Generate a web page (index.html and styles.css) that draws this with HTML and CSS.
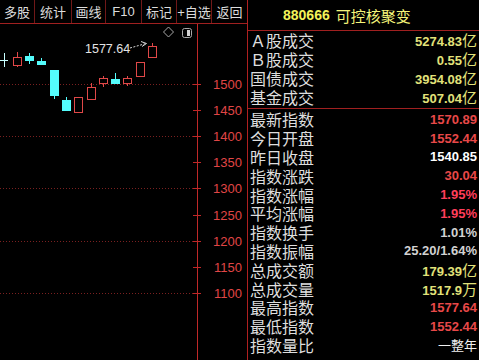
FILE: index.html
```html
<!DOCTYPE html>
<html lang="zh">
<head>
    <meta charset="UTF-8">
    <title>可控核聚变</title>
    <link rel="stylesheet" href="styles.css">
</head>
<body>
    <div id="screen">
        <div id="left-side">
            <div class="toolbar">
                <div class="tab">多股</div>
                <div class="tab">统计</div>
                <div class="tab">画线</div>
                <div class="tab">F10</div>
                <div class="tab">标记</div>
                <div class="tab">+自选</div>
                <div class="tab">返回</div>
            </div>
            <div class="chart">
                <svg width="247" height="336" viewBox="0 24 247 336">
                    <!-- grid -->
                    <g stroke="#7a2020" stroke-width="1" stroke-dasharray="1 2">
                        <line x1="0" y1="84.5" x2="196" y2="84.5"/>
                        <line x1="0" y1="136.5" x2="196" y2="136.5"/>
                        <line x1="0" y1="188.5" x2="196" y2="188.5"/>
                        <line x1="0" y1="241.5" x2="196" y2="241.5"/>
                        <line x1="0" y1="293.5" x2="196" y2="293.5"/>
                    </g>
                    <!-- axis -->
                    <line x1="197.5" y1="24" x2="197.5" y2="360" stroke="#c02828"/>
                    <g stroke="#c02828">
                        <line x1="193" y1="84.5" x2="201" y2="84.5"/>
                        <line x1="193" y1="110.5" x2="201" y2="110.5"/>
                        <line x1="193" y1="136.5" x2="201" y2="136.5"/>
                        <line x1="193" y1="162.5" x2="201" y2="162.5"/>
                        <line x1="193" y1="188.5" x2="201" y2="188.5"/>
                        <line x1="193" y1="215.5" x2="201" y2="215.5"/>
                        <line x1="193" y1="241.5" x2="201" y2="241.5"/>
                        <line x1="193" y1="267.5" x2="201" y2="267.5"/>
                        <line x1="193" y1="293.5" x2="201" y2="293.5"/>
                    </g>
                    <g class="axis-label" text-anchor="end">
                        <text x="242" y="89">1500</text>
                        <text x="242" y="115">1450</text>
                        <text x="242" y="141">1400</text>
                        <text x="242" y="167">1350</text>
                        <text x="242" y="193">1300</text>
                        <text x="242" y="220">1250</text>
                        <text x="242" y="246">1200</text>
                        <text x="242" y="272">1150</text>
                        <text x="242" y="298">1100</text>
                    </g>
                    <!-- top icons -->
                    <polygon points="168.5,27 173.5,32 168.5,37 163.5,32" fill="none" stroke="#a8a8a8"/>
                    <rect x="182.5" y="28.5" width="9" height="9" rx="2" fill="none" stroke="#a8a8a8"/>
                    <rect x="187" y="30" width="3" height="6" fill="#d0d0d0"/>
                    <!-- candles -->
                    <g stroke="#c8ffff">
                        <line x1="0" y1="60.5" x2="8" y2="60.5"/>
                        <line x1="4.5" y1="53" x2="4.5" y2="67"/>
                    </g>
                    <g stroke="#e04848" fill="none">
                        <line x1="17.5" y1="52" x2="17.5" y2="67"/>
                        <rect x="13.5" y="57.5" width="8" height="8" fill="#000"/>
                        <line x1="91.5" y1="83" x2="91.5" y2="100"/>
                        <rect x="87.5" y="87.5" width="8" height="12" fill="#000"/>
                        <rect x="74.5" y="97.5" width="8" height="15" fill="#000"/>
                        <line x1="103.5" y1="76" x2="103.5" y2="87"/>
                        <rect x="99.5" y="78.5" width="8" height="5" fill="#000"/>
                        <line x1="127.5" y1="76" x2="127.5" y2="86"/>
                        <rect x="123.5" y="78.5" width="8" height="5" fill="#000"/>
                        <rect x="136.5" y="62.5" width="8" height="14" fill="#000"/>
                        <line x1="152.5" y1="43" x2="152.5" y2="47"/>
                        <rect x="148.5" y="46.5" width="8" height="11" fill="#000"/>
                    </g>
                    <g stroke="#54fcfc" fill="#54fcfc">
                        <line x1="29.5" y1="53" x2="29.5" y2="64"/>
                        <rect x="25.5" y="56.5" width="8" height="4"/>
                        <line x1="41.5" y1="58" x2="41.5" y2="65"/>
                        <rect x="37.5" y="61.5" width="8" height="3"/>
                        <line x1="54.5" y1="70" x2="54.5" y2="99"/>
                        <rect x="50.5" y="70.5" width="8" height="25"/>
                        <line x1="66.5" y1="97" x2="66.5" y2="101"/>
                        <rect x="62.5" y="100.5" width="8" height="10"/>
                        <line x1="115.5" y1="73" x2="115.5" y2="83"/>
                        <rect x="111.5" y="79.5" width="8" height="4"/>
                    </g>
                    <!-- high marker -->
                    <text class="high-label" x="85" y="53">1577.64</text>
                    <g stroke="#d8d8d8" fill="none">
                        <line x1="130" y1="48" x2="146" y2="43.5" stroke-dasharray="2 1.5"/>
                        <polyline points="141,41.5 146.5,43.5 142,46.5"/>
                    </g>
                </svg>
            </div>
        </div>

        <div id="info-panel">
            <div class="panel-title">
                <span class="code">880666</span>
                <span class="name">可控核聚变</span>
            </div>
            <div class="group first">
                <div class="row"><span class="label">Ａ股成交</span><span class="value yellow">5274.83<i>亿</i></span></div>
                <div class="row"><span class="label">Ｂ股成交</span><span class="value yellow">0.55<i>亿</i></span></div>
                <div class="row"><span class="label">国债成交</span><span class="value yellow">3954.08<i>亿</i></span></div>
                <div class="row"><span class="label">基金成交</span><span class="value yellow">507.04<i>亿</i></span></div>
            </div>
            <div class="group second">
                <div class="row"><span class="label">最新指数</span><span class="value red">1570.89</span></div>
                <div class="row"><span class="label">今日开盘</span><span class="value red">1552.44</span></div>
                <div class="row"><span class="label">昨日收盘</span><span class="value white">1540.85</span></div>
                <div class="row"><span class="label">指数涨跌</span><span class="value red">30.04</span></div>
                <div class="row"><span class="label">指数涨幅</span><span class="value bright">1.95%</span></div>
                <div class="row"><span class="label">平均涨幅</span><span class="value bright">1.95%</span></div>
                <div class="row"><span class="label">指数换手</span><span class="value gray">1.01%</span></div>
                <div class="row"><span class="label">指数振幅</span><span class="value gray">25.20/1.64%</span></div>
                <div class="row"><span class="label">总成交额</span><span class="value yellow">179.39<i>亿</i></span></div>
                <div class="row"><span class="label">总成交量</span><span class="value yellow">1517.9<i>万</i></span></div>
                <div class="row"><span class="label">最高指数</span><span class="value red">1577.64</span></div>
                <div class="row"><span class="label">最低指数</span><span class="value red">1552.44</span></div>
                <div class="row"><span class="label">指数量比</span><span class="value note">一整年</span></div>
            </div>
        </div>
    </div>
</body>
</html>
```

FILE: styles.css
```css
body {
    margin: 0;
    padding: 0;
    background-color: #000000;
    color: #d8d8d8;
    font-family: "Liberation Sans", "Noto Sans CJK SC", sans-serif;
}

#screen {
    display: flex;
    width: 479px;
    height: 360px;
    overflow: hidden;
}

#left-side {
    width: 247px;
    flex-shrink: 0;
    display: flex;
    flex-direction: column;
}

.toolbar {
    display: flex;
    height: 23px;
    border-bottom: 1px solid #a02020;
}

.tab {
    box-sizing: border-box;
    flex-shrink: 0;
    width: 35px;
    border-right: 1px solid #701818;
    display: flex;
    align-items: center;
    justify-content: center;
    font-size: 13px;
    white-space: nowrap;
    color: #dcdcdc;
}

.tab:nth-child(2) {
    width: 37px;
}

.tab:nth-child(3) {
    width: 34px;
}

.tab:nth-child(4) {
    width: 36px;
}

.tab:last-child {
    border-right: none;
}

.chart svg {
    display: block;
}

.axis-label {
    font-size: 13px;
    fill: #e04646;
}

.high-label {
    font-size: 12.5px;
    fill: #e4e4e4;
}

#info-panel {
    width: 231px;
    flex-shrink: 0;
    border-left: 1px solid #b02020;
    display: flex;
    flex-direction: column;
}

.panel-title {
    height: 30px;
    flex-shrink: 0;
    border-bottom: 1px solid #a02020;
    display: flex;
    align-items: center;
    padding-left: 35px;
    gap: 6px;
}

.code {
    font-size: 14px;
    font-weight: bold;
    color: #f2f25a;
}

.name {
    font-size: 15px;
    color: #f4f47a;
}

.group.first {
    padding-bottom: 1px;
    border-bottom: 1px solid #a02020;
}

.group.second {
    padding-top: 2px;
}

.row {
    box-sizing: border-box;
    height: 19px;
    display: flex;
    align-items: center;
    justify-content: space-between;
    padding: 0 2px 2px 2px;
}

.group.second .row {
    height: 18.8px;
}

.label {
    font-size: 16px;
    color: #dedede;
}

.value {
    font-size: 13px;
    font-weight: bold;
}

.value i {
    font-style: normal;
    font-weight: normal;
    font-size: 15px;
}

.yellow {
    color: #e2e27a;
}

.red {
    color: #e84848;
}

.bright {
    color: #ff3e5a;
}

.white {
    color: #ffffff;
}

.gray {
    color: #d2d2d2;
}

.note {
    font-weight: normal;
    color: #f0f0f0;
}
```
